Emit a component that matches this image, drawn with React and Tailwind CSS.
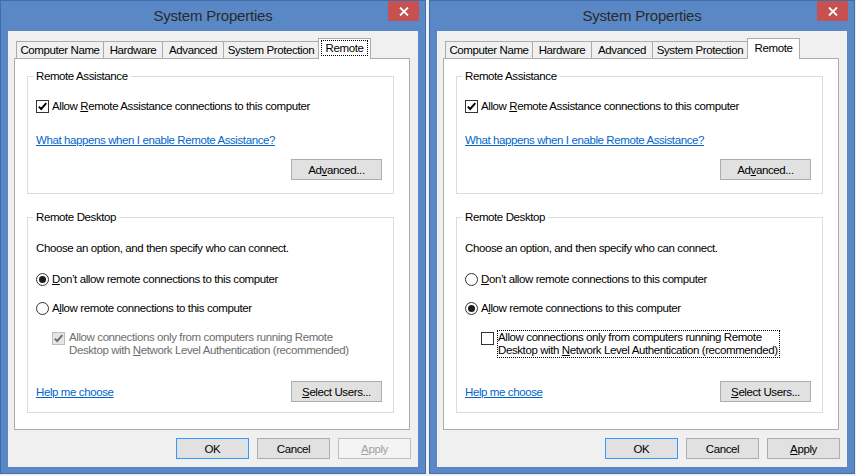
import React from "react";

function Check({ checked, disabled }) {
  return (
    <span
      className={
        disabled
          ? "w-[13px] h-[13px] border border-[#bcbcbc] bg-[#e6e6e6] flex items-center justify-center shrink-0"
          : "w-[13px] h-[13px] border border-[#333333] bg-white flex items-center justify-center shrink-0"
      }
    >
      {checked && (
        <svg width="11" height="11" viewBox="0 0 11 11">
          <path
            d="M1.8 5.6 L4.2 8 L9.3 2.2"
            fill="none"
            stroke={disabled ? "#6e6e6e" : "#000"}
            strokeWidth="1.9"
          />
        </svg>
      )}
    </span>
  );
}

function Radio({ on }) {
  return (
    <span className="w-[13px] h-[13px] rounded-full border border-[#333333] bg-white flex items-center justify-center shrink-0">
      {on && <span className="w-[7px] h-[7px] rounded-full bg-[#1c1c1c]" />}
    </span>
  );
}

function Tab({ children, w }) {
  return (
    <div
      className={
        "h-[17px] mb-[1px] -ml-px first:ml-0 border border-b-0 border-[#acacac] bg-[#f0f0f0] flex items-center justify-center whitespace-nowrap " +
        w
      }
    >
      {children}
    </div>
  );
}

function Window({ focusTab, allow }) {
  return (
    <div className="w-[426px] h-[474px] border border-[#3f6eae] bg-[#5a88c6] flex flex-col shrink-0">
      <div className="h-[30px] grid grid-cols-[1fr_auto_1fr]">
        <div />
        <div className="pt-[5px] text-[15px] leading-[20px] tracking-[-0.2px] text-[#2a2a2a] whitespace-nowrap">
          System Properties
        </div>
        <div className="flex justify-end pr-[6px]">
          <div className="w-[31px] h-[20px] bg-[#c75050] flex items-center justify-center">
            <svg width="10" height="9" viewBox="0 0 10 9">
              <path d="M1 0.5 L9 8.5 M9 0.5 L1 8.5" stroke="#fff" strokeWidth="1.8" />
            </svg>
          </div>
        </div>
      </div>
      <div className="mx-[7px] h-[436px] bg-[#f0f0f0] flex flex-col pt-[7px]">
        <div className="ml-[8px] h-[21px] mb-[-1px] flex items-end relative z-10">
          <Tab w="w-[88px]">Computer Name</Tab>
          <Tab w="w-[60px]">Hardware</Tab>
          <Tab w="w-[62px]">Advanced</Tab>
          <Tab w="w-[96px]">System Protection</Tab>
          <div className="w-[53px] h-[21px] -ml-px border border-b-0 border-[#acacac] bg-white px-[2px] pt-[1px] pb-[3px] flex">
            <div
              className={
                focusTab
                  ? "flex-1 border border-dotted border-black flex items-center justify-center"
                  : "flex-1 border border-transparent flex items-center justify-center"
              }
            >
              Remote
            </div>
          </div>
        </div>
        <div className="ml-[6px] w-[396px] h-[372px] bg-white border border-[#acacac] pt-[9px] pl-[12px]">
          <fieldset className="w-[367px] border border-[#dcdcdc]">
            <legend className="ml-[5px] px-[3px] leading-[16px]">Remote Assistance</legend>
            <div className="pl-[8px] pr-[11px] pb-[13px]">
              <div className="mt-[14px] h-[16px] flex items-center gap-[3px] whitespace-nowrap">
                <Check checked />
                <span>
                  Allow <u className="underline-offset-[1px]">R</u>emote Assistance connections to this computer
                </span>
              </div>
              <div className="mt-[18px] h-[16px] flex items-center whitespace-nowrap">
                <span className="text-[#0066cc] underline underline-offset-[1px]">
                  What happens when I enable Remote Assistance?
                </span>
              </div>
              <div className="mt-[11px] flex justify-end">
                <div className="w-[91px] h-[21px] bg-[#e1e1e1] border border-[#adadad] flex items-center justify-center">
                  <span>
                    Ad<u className="underline-offset-[1px]">v</u>anced...
                  </span>
                </div>
              </div>
            </div>
          </fieldset>
          <fieldset className="mt-[15px] w-[367px] border border-[#dcdcdc]">
            <legend className="ml-[5px] px-[3px] leading-[16px]">Remote Desktop</legend>
            <div className="pl-[8px] pr-[11px] pb-[10px] whitespace-nowrap">
              <div className="mt-[15px] h-[16px] flex items-center">
                Choose an option, and then specify who can connect.
              </div>
              <div className="mt-[15px] h-[16px] flex items-center gap-[3px]">
                <Radio on={!allow} />
                <span>
                  <u className="underline-offset-[1px]">D</u>on’t allow remote connections to this computer
                </span>
              </div>
              <div className="mt-[13px] h-[16px] flex items-center gap-[3px]">
                <Radio on={allow} />
                <span>
                  A<u className="underline-offset-[1px]">l</u>low remote connections to this computer
                </span>
              </div>
              <div className="mt-[14px] pl-[16px] flex items-start gap-[3px]">
                <div className="pt-[2px]">
                  <Check checked={!allow} disabled={!allow} />
                </div>
                <div
                  className={
                    allow
                      ? "border border-dotted border-black leading-[13px] pr-[1px] text-black"
                      : "border border-transparent leading-[13px] pr-[1px] text-[#6d6d6d]"
                  }
                >
                  Allow connections only from computers running Remote
                  <br />
                  Desktop with <u className="underline-offset-[1px]">N</u>etwork Level Authentication (recommended)
                </div>
              </div>
              <div className="mt-[23px] flex items-center justify-between">
                <span className="text-[#0066cc] underline underline-offset-[1px]">Help me choose</span>
                <div className="w-[91px] h-[21px] bg-[#e1e1e1] border border-[#adadad] flex items-center justify-center">
                  <span>
                    <u className="underline-offset-[1px]">S</u>elect Users...
                  </span>
                </div>
              </div>
            </div>
          </fieldset>
        </div>
        <div className="mt-[8px] mr-[7px] flex justify-end gap-[8px]">
          <div className="w-[73px] h-[21px] bg-[#e1e1e1] border border-[#3399ff] flex items-center justify-center">
            OK
          </div>
          <div className="w-[73px] h-[21px] bg-[#e1e1e1] border border-[#adadad] flex items-center justify-center">
            Cancel
          </div>
          <div
            className={
              allow
                ? "w-[73px] h-[21px] bg-[#e1e1e1] border border-[#adadad] flex items-center justify-center text-black"
                : "w-[73px] h-[21px] bg-[#f4f4f4] border border-[#bfbfbf] flex items-center justify-center text-[#a0a0a0]"
            }
          >
            <span>
              <u className="underline-offset-[1px]">A</u>pply
            </span>
          </div>
        </div>
      </div>
    </div>
  );
}

export default function App() {
  return (
    <div className="w-[856px] h-[476px] bg-[#f0f0f0] flex gap-[3px] text-[11.5px] leading-[16px] tracking-[-0.4px] text-black font-['Segoe_UI','Liberation_Sans',Arial,sans-serif]">
      <Window focusTab allow={false} />
      <Window allow />
    </div>
  );
}
